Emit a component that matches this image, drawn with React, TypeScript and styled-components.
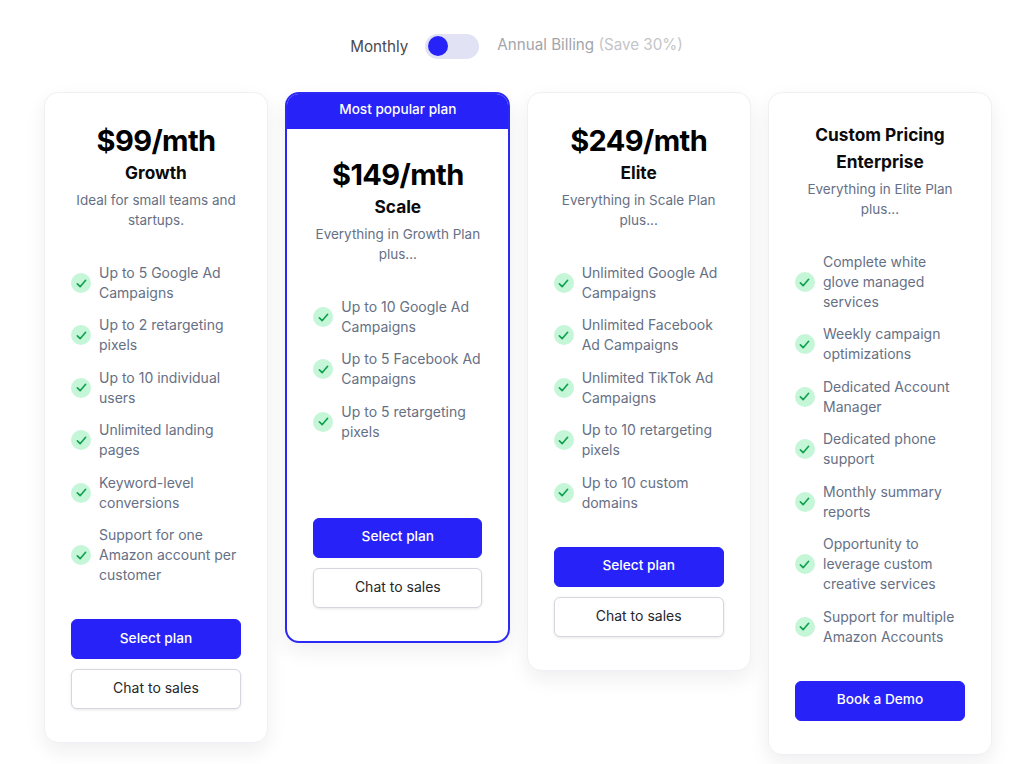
import React from 'react'
import styled, { createGlobalStyle } from 'styled-components'

const GlobalStyle = createGlobalStyle`
  html, body {
    margin: 0;
    background: #fff;
    font-family: Inter, 'Liberation Sans', sans-serif;
  }
`

const Page = styled.div`
  width: 1024px;
  height: 764px;
  overflow: hidden;
  box-sizing: border-box;
  padding: 33px 32px 0 44px;
`

const BillingRow = styled.div`
  display: flex;
  align-items: center;
  justify-content: center;
  height: 26px;
  margin-right: 3px;
`

const MonthlyLabel = styled.span`
  font-size: 15.2px;
  color: #4a4a4f;
  margin-top: 1px;
`

const Toggle = styled.div`
  width: 54px;
  height: 25px;
  border-radius: 13px;
  background: #e1e3f5;
  margin: 0 18px 0 17px;
  display: flex;
  align-items: center;
  padding-left: 3px;
  box-sizing: border-box;
`

const Knob = styled.div`
  width: 20px;
  height: 20px;
  border-radius: 50%;
  background: #2722f8;
`

const AnnualLabel = styled.span`
  font-size: 15.2px;
  color: #a3a5aa;
  margin-top: -4px;
`

const SaveNote = styled.span`
  color: #c4c5c9;
`

const CardRow = styled.div`
  display: flex;
  align-items: flex-start;
  gap: 17.33px;
  margin-top: 33px;
`

const Card = styled.section<{ $featured?: boolean }>`
  width: ${p => (p.$featured ? '225px' : '224px')};
  margin-right: ${p => (p.$featured ? '-1px' : '0')};
  flex: none;
  box-sizing: border-box;
  border-radius: 14px;
  background: #fff;
  overflow: hidden;
  border: ${p => (p.$featured ? '2px solid #2c28f6' : '1px solid #eff0f3')};
  box-shadow: 0 8px 20px rgba(24, 28, 60, 0.07);
`

const Banner = styled.div`
  height: 35px;
  background: #2722f8;
  color: #fff;
  font-size: 13.6px;
  font-weight: 500;
  line-height: 30px;
  text-align: center;
`

const CardBody = styled.div<{ $featured?: boolean }>`
  display: flex;
  flex-direction: column;
  padding: ${p => (p.$featured ? '28px 26px 33px' : '30px 26px 33px')};
`

const Price = styled.div`
  font-size: 29px;
  line-height: 36px;
  font-weight: 700;
  color: #000;
  text-align: center;
  letter-spacing: -0.6px;
`

const PlanName = styled.div`
  font-size: 17.3px;
  line-height: 24px;
  font-weight: 700;
  color: #0b0b0d;
  text-align: center;
  margin-top: 2px;
`

const CustomHeading = styled.div`
  font-size: 17.3px;
  line-height: 27px;
  font-weight: 700;
  color: #0b0b0d;
  text-align: center;
  margin: -2px 0 -1px;
`

const Description = styled.p`
  margin: 5px 0 0;
  font-size: 13.5px;
  line-height: 20px;
  color: #667085;
  text-align: center;
`

const FeatureList = styled.ul`
  list-style: none;
  margin: 33px 0 0;
  padding: 0;
  display: flex;
  flex-direction: column;
  gap: 12.45px;
`

const Feature = styled.li`
  display: flex;
  align-items: center;
  gap: 8px;
  font-size: 14px;
  line-height: 20px;
  color: #667085;
`

const CheckBadge = styled.span`
  width: 20px;
  height: 20px;
  flex: none;
  border-radius: 50%;
  background: #c6f6d8;
  display: flex;
  align-items: center;
  justify-content: center;
`

const Actions = styled.div<{ $gap: number }>`
  display: flex;
  flex-direction: column;
  gap: 10px;
  margin-top: ${p => p.$gap}px;
`

const PrimaryButton = styled.button`
  height: 40px;
  border: 1px solid #2722f8;
  border-radius: 6px;
  background: #2722f8;
  color: #fff;
  padding: 0 0 3px;
  font: 500 13.7px Inter, 'Liberation Sans', sans-serif;
`

const SecondaryButton = styled.button`
  height: 40px;
  border: 1px solid #d4d7e0;
  border-radius: 6px;
  background: #fff;
  color: #26262a;
  padding: 0 0 3px;
  font: 400 14px Inter, 'Liberation Sans', sans-serif;
  box-shadow: 0 1px 3px rgba(16, 24, 40, 0.1);
`

const Check = () => (
  <CheckBadge>
    <svg width="11" height="11" viewBox="0 0 12 12" fill="none">
      <path d="M1.5 6.5 4.5 9.5 10.5 2.5" stroke="#12a150" strokeWidth="1.8" strokeLinecap="round" strokeLinejoin="round" />
    </svg>
  </CheckBadge>
)

type Plan = {
  price?: string
  title?: string
  name: string
  description: string
  features: string[]
  gap: number
  banner?: boolean
  demo?: boolean
}

const plans: Plan[] = [
  {
    price: '$99/mth',
    name: 'Growth',
    description: 'Ideal for small teams and startups.',
    features: [
      'Up to 5 Google Ad Campaigns',
      'Up to 2 retargeting pixels',
      'Up to 10 individual users',
      'Unlimited landing pages',
      'Keyword-level conversions',
      'Support for one Amazon account per customer',
    ],
    gap: 34,
  },
  {
    price: '$149/mth',
    name: 'Scale',
    description: 'Everything in Growth Plan plus...',
    features: ['Up to 10 Google Ad Campaigns', 'Up to 5 Facebook Ad Campaigns', 'Up to 5 retargeting pixels'],
    gap: 76,
    banner: true,
  },
  {
    price: '$249/mth',
    name: 'Elite',
    description: 'Everything in Scale Plan plus...',
    features: [
      'Unlimited Google Ad Campaigns',
      'Unlimited Facebook Ad Campaigns',
      'Unlimited TikTok Ad Campaigns',
      'Up to 10 retargeting pixels',
      'Up to 10 custom domains',
    ],
    gap: 34,
  },
  {
    title: 'Custom Pricing',
    name: 'Enterprise',
    description: 'Everything in Elite Plan plus...',
    features: [
      'Complete white glove managed services',
      'Weekly campaign optimizations',
      'Dedicated Account Manager',
      'Dedicated phone support',
      'Monthly summary reports',
      'Opportunity to leverage custom creative services',
      'Support for multiple Amazon Accounts',
    ],
    gap: 34,
    demo: true,
  },
]

const App = () => {
  return (
    <Page>
      <GlobalStyle />
      <BillingRow>
        <MonthlyLabel>Monthly</MonthlyLabel>
        <Toggle>
          <Knob />
        </Toggle>
        <AnnualLabel>
          Annual Billing <SaveNote>(Save 30%)</SaveNote>
        </AnnualLabel>
      </BillingRow>

      <CardRow>
        {plans.map(plan => (
          <Card key={plan.name} $featured={plan.banner}>
            {plan.banner && <Banner>Most popular plan</Banner>}
            <CardBody $featured={plan.banner}>
              {plan.price && <Price>{plan.price}</Price>}
              {plan.title ? (
                <CustomHeading>
                  {plan.title}
                  <br />
                  {plan.name}
                </CustomHeading>
              ) : (
                <PlanName>{plan.name}</PlanName>
              )}
              <Description>{plan.description}</Description>
              <FeatureList>
                {plan.features.map(feature => (
                  <Feature key={feature}>
                    <Check />
                    <span>{feature}</span>
                  </Feature>
                ))}
              </FeatureList>
              <Actions $gap={plan.gap}>
                {plan.demo ? (
                  <PrimaryButton>Book a Demo</PrimaryButton>
                ) : (
                  <>
                    <PrimaryButton>Select plan</PrimaryButton>
                    <SecondaryButton>Chat to sales</SecondaryButton>
                  </>
                )}
              </Actions>
            </CardBody>
          </Card>
        ))}
      </CardRow>
    </Page>
  )
}

export default App
